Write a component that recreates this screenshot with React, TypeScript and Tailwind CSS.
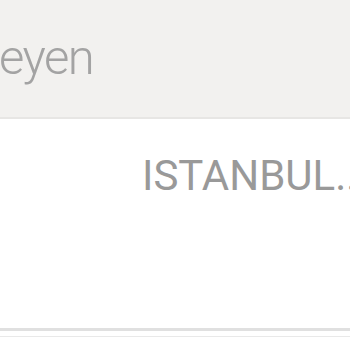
import React from "react";

export default function App() {
  return (
    <div
      className="w-[350px] h-[350px] overflow-hidden bg-white flex flex-col"
      style={{ fontFamily: "Roboto, 'Liberation Sans', sans-serif" }}
    >
      {/* Header */}
      <header className="h-[119px] shrink-0 bg-[#f2f1ef] border-b-2 border-[#e7e6e4] overflow-hidden pt-[33px]">
        <h1 className="-ml-[1px] text-[49px] leading-none font-light tracking-[-1.5px] text-[#a3a3a3] whitespace-nowrap">
          eyen
        </h1>
      </header>

      {/* City row */}
      <main className="h-[209px] shrink-0 overflow-hidden">
        <p className="pl-[142px] pt-[36px] text-[42px] leading-none text-[#999999] whitespace-nowrap">
          ISTANBUL...
        </p>
      </main>

      {/* Divider */}
      <div className="h-[3px] bg-[#e0e0e0]" />
      <div className="h-[5px]" />
      <div className="h-px bg-[#e9e9e9]" />
    </div>
  );
}
